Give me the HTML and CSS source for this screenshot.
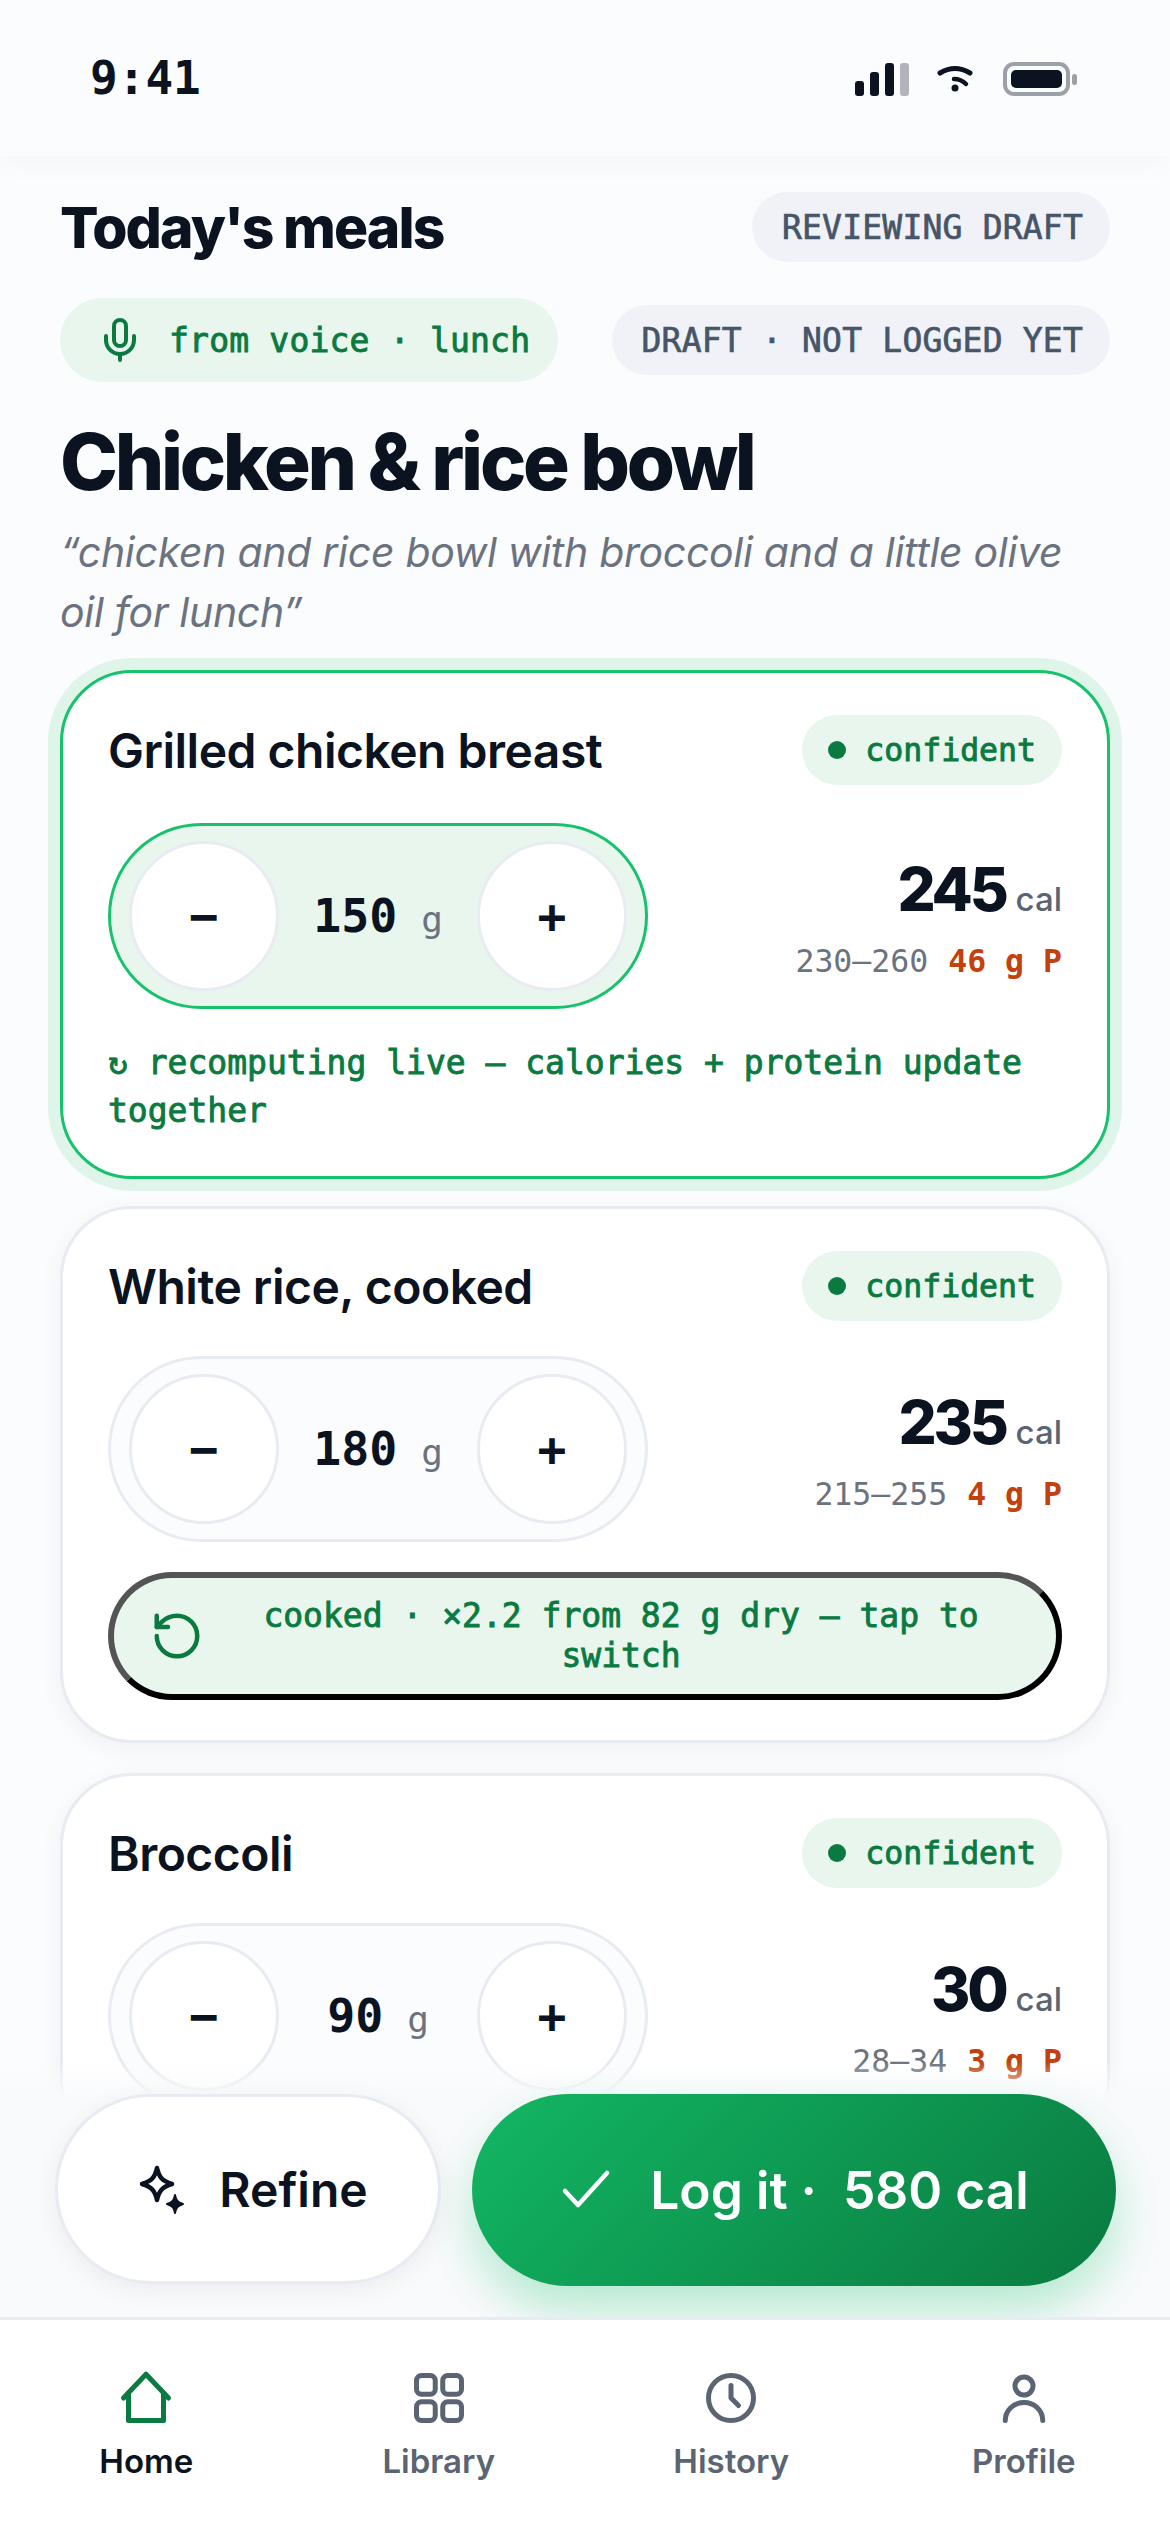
FILE: index.html
```html
<!DOCTYPE html>
<html lang="en">
<head>
    <meta charset="UTF-8">
    <meta name="viewport" content="width=device-width, initial-scale=1.0">
    <title>Today's meals</title>
    <link rel="stylesheet" href="styles.css">
</head>
<body>
    <div class="status-bar">
        <span class="clock">9:41</span>
        <div class="status-icons">
            <svg width="54" height="33" viewBox="0 0 54 33">
                <rect x="0" y="18" width="9" height="15" rx="3" fill="#0b1220"/>
                <rect x="15" y="9" width="9" height="24" rx="3" fill="#0b1220"/>
                <rect x="30" y="0" width="9" height="33" rx="3" fill="#0b1220"/>
                <rect x="45" y="0" width="9" height="33" rx="3" fill="#b1b4bb"/>
            </svg>
            <svg width="40" height="30" viewBox="0 0 40 30" fill="none" stroke="#0b1220" stroke-width="5" stroke-linecap="round">
                <path d="M4 9Q19 0 34 9"/>
                <path d="M18 15Q25 15 30 20" stroke-width="4.5"/>
                <circle cx="19" cy="24" r="3.5" fill="#0b1220" stroke="none"/>
            </svg>
            <div class="battery">
                <div class="battery-body"><div class="battery-fill"></div></div>
                <div class="battery-nub"></div>
            </div>
        </div>
    </div>

    <main class="content">
        <div class="scroll">
            <div class="top-row">
                <h2 class="page-title">Today's meals</h2>
                <span class="pill">REVIEWING DRAFT</span>
            </div>
            <div class="top-row">
                <span class="pill pill-voice">
                    <svg width="48" height="48" viewBox="0 0 24 24" fill="none" stroke="currentColor" stroke-width="2" stroke-linecap="round" stroke-linejoin="round">
                        <path d="M12 2a3 3 0 0 0-3 3v7a3 3 0 0 0 6 0V5a3 3 0 0 0-3-3z"/>
                        <path d="M19 10v2a7 7 0 0 1-14 0v-2"/>
                        <path d="M12 19v3"/>
                    </svg>
                    from voice · lunch
                </span>
                <span class="pill">DRAFT · NOT LOGGED YET</span>
            </div>
            <h1 class="meal-title">Chicken &amp; rice bowl</h1>
            <p class="transcript">“chicken and rice bowl with broccoli and a little olive oil for lunch”</p>

            <div class="cards">
                <section class="card card-active">
                    <div class="card-head">
                        <h3>Grilled chicken breast</h3>
                        <span class="chip"><i class="dot"></i>confident</span>
                    </div>
                    <div class="card-row">
                        <div class="stepper stepper-active">
                            <button class="step">−</button>
                            <div class="amount"><b>150</b><span>g</span></div>
                            <button class="step">+</button>
                        </div>
                        <div class="nums">
                            <div class="cal"><b>245</b><span>cal</span></div>
                            <div class="range">230–260<b>46 g P</b></div>
                        </div>
                    </div>
                    <p class="note">↻ recomputing live — calories + protein update together</p>
                </section>

                <section class="card">
                    <div class="card-head">
                        <h3>White rice, cooked</h3>
                        <span class="chip"><i class="dot"></i>confident</span>
                    </div>
                    <div class="card-row">
                        <div class="stepper">
                            <button class="step">−</button>
                            <div class="amount"><b>180</b><span>g</span></div>
                            <button class="step">+</button>
                        </div>
                        <div class="nums">
                            <div class="cal"><b>235</b><span>cal</span></div>
                            <div class="range">215–255<b>4 g P</b></div>
                        </div>
                    </div>
                    <button class="switch">
                        <svg width="54" height="54" viewBox="0 0 24 24" fill="none" stroke="currentColor" stroke-width="2" stroke-linecap="round" stroke-linejoin="round">
                            <path d="M3 12a9 9 0 1 0 9-9 9.75 9.75 0 0 0-6.74 2.74L3 8"/>
                            <path d="M3 3v5h5"/>
                        </svg>
                        <span>cooked · ×2.2 from 82 g dry — tap to switch</span>
                    </button>
                </section>

                <section class="card">
                    <div class="card-head">
                        <h3>Broccoli</h3>
                        <span class="chip"><i class="dot"></i>confident</span>
                    </div>
                    <div class="card-row">
                        <div class="stepper">
                            <button class="step">−</button>
                            <div class="amount"><b>90</b><span>g</span></div>
                            <button class="step">+</button>
                        </div>
                        <div class="nums">
                            <div class="cal"><b>30</b><span>cal</span></div>
                            <div class="range">28–34<b>3 g P</b></div>
                        </div>
                    </div>
                </section>
            </div>
        </div>

        <div class="actions">
            <button class="btn-refine">
                <svg width="54" height="54" viewBox="0 0 54 54" fill="none" stroke="#0b1220" stroke-width="4.5" stroke-linejoin="round">
                    <path d="M21 6C23 15 26 19 36 22C26 25 23 29 21 38C19 29 16 25 6 22C16 19 19 15 21 6Z"/>
                    <path d="M39 33C40 38 41 40 47 42C41 44 40 46 39 51C38 46 37 44 31 42C37 40 38 38 39 33Z" fill="#0b1220" stroke-width="2"/>
                </svg>
                Refine
            </button>
            <button class="btn-log">
                <svg width="54" height="54" viewBox="0 0 54 54" fill="none" stroke="#fff" stroke-width="4.5" stroke-linecap="round" stroke-linejoin="round">
                    <path d="M6 28L19 42L48 10"/>
                </svg>
                <span>Log it ·&nbsp; 580 cal</span>
            </button>
        </div>
    </main>

    <nav class="tabs">
        <a class="tab tab-on">
            <svg width="60" height="60" viewBox="0 0 24 24" fill="none" stroke="#0a7a40" stroke-width="2" stroke-linecap="round" stroke-linejoin="round">
                <path d="M3 12L12 2.5L21 12"/>
                <path d="M5 10V21H19V10"/>
            </svg>
            Home
        </a>
        <a class="tab">
            <svg width="60" height="60" viewBox="0 0 24 24" fill="none" stroke="#5b6472" stroke-width="2" stroke-linecap="round" stroke-linejoin="round">
                <rect x="3" y="3" width="7.5" height="7.5" rx="2"/>
                <rect x="13.5" y="3" width="7.5" height="7.5" rx="2"/>
                <rect x="3" y="13.5" width="7.5" height="7.5" rx="2"/>
                <rect x="13.5" y="13.5" width="7.5" height="7.5" rx="2"/>
            </svg>
            Library
        </a>
        <a class="tab">
            <svg width="60" height="60" viewBox="0 0 24 24" fill="none" stroke="#5b6472" stroke-width="2" stroke-linecap="round" stroke-linejoin="round">
                <circle cx="12" cy="12" r="9"/>
                <path d="M12 7v5l3 3"/>
            </svg>
            History
        </a>
        <a class="tab">
            <svg width="60" height="60" viewBox="0 0 24 24" fill="none" stroke="#5b6472" stroke-width="2" stroke-linecap="round" stroke-linejoin="round">
                <circle cx="12" cy="7.2" r="3.6"/>
                <path d="M4.5 21c0-4 3.3-7.2 7.5-7.2s7.5 3.2 7.5 7.2"/>
            </svg>
            Profile
        </a>
    </nav>
</body>
</html>
```

FILE: styles.css
```css
* {
    box-sizing: border-box;
}

body {
    margin: 0;
    height: 100vh;
    display: flex;
    flex-direction: column;
    overflow: hidden;
    background-color: #fbfcfe;
    color: #0b1220;
    font-family: Inter, "Liberation Sans", sans-serif;
}

button {
    font-family: inherit;
    cursor: pointer;
}

/* status bar */
.status-bar {
    height: 156px;
    flex: none;
    padding: 2px 93px 0 90px;
    display: flex;
    align-items: center;
    justify-content: space-between;
    background-color: #fbfcfe;
    box-shadow: 0 6px 30px rgba(15, 23, 42, 0.03);
    position: relative;
}

.clock {
    margin-bottom: 3px;
    font-family: "DejaVu Sans Mono", monospace;
    font-size: 46px;
    font-weight: 700;
}

.status-icons {
    display: flex;
    align-items: center;
    gap: 27px;
}

.battery {
    display: flex;
    align-items: center;
    gap: 2px;
}

.battery-body {
    width: 67px;
    height: 34px;
    padding: 4px;
    border: 4px solid #9ca0a8;
    border-radius: 11px;
}

.battery-fill {
    height: 100%;
    border-radius: 5px;
    background-color: #0b1220;
}

.battery-nub {
    width: 5px;
    height: 11px;
    border-radius: 3px;
    background-color: #9ca0a8;
}

/* main area */
.content {
    flex: 1;
    min-height: 0;
    position: relative;
    overflow: hidden;
}

.scroll {
    padding: 36px 60px 0;
}

.top-row {
    display: flex;
    align-items: center;
    justify-content: space-between;
    margin-bottom: 36px;
    min-height: 70px;
}

.page-title {
    margin: 0;
    font-size: 57px;
    font-weight: 800;
    letter-spacing: -1.9px;
}

.pill {
    height: 70px;
    padding: 0 27px 0 30px;
    display: flex;
    align-items: center;
    border-radius: 35px;
    background-color: #f0f2f8;
    color: #475569;
    font-family: "DejaVu Sans Mono", monospace;
    font-size: 33px;
    letter-spacing: 0.2px;
    -webkit-text-stroke: 0.7px currentColor;
    white-space: nowrap;
}

.pill-voice {
    height: 84px;
    border-radius: 42px;
    padding: 0 28px 0 36px;
    gap: 25px;
    background-color: #e8f6ee;
    color: #0a7a40;
    -webkit-text-stroke: 0.9px currentColor;
}

.meal-title {
    margin: 0;
    font-size: 78px;
    line-height: 88px;
    font-weight: 800;
    letter-spacing: -3.3px;
}

.transcript {
    margin: 16px 0 0;
    padding-right: 40px;
    font-size: 41px;
    line-height: 60px;
    letter-spacing: -0.3px;
    font-style: italic;
    color: #6b7280;
}

/* cards */
.cards {
    margin-top: 28px;
    display: flex;
    flex-direction: column;
    gap: 30px;
}

.card {
    padding: 42px 45px 40px;
    border: 3px solid #e8ebf2;
    border-radius: 72px;
    background-color: #fff;
    box-shadow: 0 6px 24px rgba(15, 23, 42, 0.05);
}

.card-active {
    padding-bottom: 41px;
    margin-bottom: -3px;
    border-color: #16c26b;
    box-shadow: 0 0 0 12px #dff5ea;
}

.card-active .card-row {
    margin-top: 38px;
}

.card-head {
    display: flex;
    align-items: center;
    justify-content: space-between;
    height: 70px;
}

.card-head h3 {
    margin: 0;
    font-size: 48px;
    font-weight: 600;
    letter-spacing: -0.5px;
}

.chip {
    height: 70px;
    padding: 0 26px;
    display: flex;
    align-items: center;
    gap: 19px;
    border-radius: 35px;
    background-color: #e8f6ee;
    color: #0a7a40;
    font-family: "DejaVu Sans Mono", monospace;
    font-size: 31.5px;
    -webkit-text-stroke: 0.9px currentColor;
}

.dot {
    width: 18px;
    height: 18px;
    border-radius: 50%;
    background-color: #0a7a40;
}

.card-row {
    margin-top: 35px;
    display: flex;
    align-items: center;
    justify-content: space-between;
}

.stepper {
    width: 540px;
    padding: 15px 18px;
    display: flex;
    align-items: center;
    border: 3px solid #e8ebf2;
    border-radius: 93px;
    background-color: #fbfcfe;
}

.stepper-active {
    border-color: #16c26b;
    background-color: #e8f6ee;
}

.step {
    width: 150px;
    height: 150px;
    padding: 0;
    border: 3px solid #e8ebf2;
    border-radius: 50%;
    background-color: #fff;
    color: #0b1220;
    font-family: "DejaVu Sans Mono", monospace;
    font-size: 48px;
    font-weight: 700;
}

.amount {
    flex: 1;
    display: flex;
    align-items: baseline;
    justify-content: center;
    gap: 24px;
    font-family: "DejaVu Sans Mono", monospace;
}

.amount b {
    font-size: 46.5px;
}

.amount span {
    font-size: 36px;
    color: #6b7280;
}

.nums {
    text-align: right;
}

.cal {
    display: flex;
    align-items: baseline;
    justify-content: flex-end;
    gap: 10px;
}

.cal b {
    font-size: 60px;
    font-weight: 800;
    letter-spacing: -3.2px;
}

.cal span {
    font-size: 33px;
    font-weight: 500;
    color: #5b6472;
}

.range {
    margin-top: 18px;
    font-family: "DejaVu Sans Mono", monospace;
    font-size: 31.5px;
    color: #6b7280;
}

.range b {
    margin-left: 20px;
    color: #c2410c;
}

.note {
    margin: 30px 0 0;
    font-family: "DejaVu Sans Mono", monospace;
    font-size: 33px;
    line-height: 48px;
    color: #0a7a40;
    -webkit-text-stroke: 0.9px currentColor;
}

.switch {
    width: 100%;
    height: 128px;
    margin-top: 30px;
    padding: 0 36px;
    display: flex;
    align-items: center;
    gap: 18px;
    border: 6px outset #000;
    border-radius: 64px;
    background-color: #e8f6ee;
    color: #0a7a40;
    font-family: "DejaVu Sans Mono", monospace;
    font-size: 33px;
    line-height: 40px;
    -webkit-text-stroke: 0.9px currentColor;
}

.switch svg {
    flex: none;
}

.switch span {
    flex: 1;
    text-align: center;
}

/* floating actions */
.actions {
    position: absolute;
    left: 0;
    right: 0;
    bottom: 0;
    padding: 64px 54px 31px 55px;
    display: flex;
    gap: 31px;
    background: linear-gradient(to bottom, rgba(251, 252, 254, 0) 32px, #f9fafc 70px);
}

.btn-refine {
    width: 386px;
    height: 190px;
    padding-left: 14px;
    display: flex;
    align-items: center;
    justify-content: center;
    gap: 29px;
    border: 3px solid #e8ebf2;
    border-radius: 95px;
    background-color: #fff;
    color: #0b1220;
    font-size: 48px;
    font-weight: 600;
    box-shadow: 0 6px 24px rgba(15, 23, 42, 0.06);
}

.btn-log {
    flex: 1;
    height: 192px;
    padding-left: 6px;
    display: flex;
    align-items: center;
    justify-content: center;
    gap: 37px;
    border: none;
    border-radius: 96px;
    background: linear-gradient(135deg, #12b763, #0a7a40);
    color: #fff;
    font-size: 51.5px;
    font-weight: 600;
    box-shadow: 0 24px 48px rgba(22, 194, 107, 0.3);
}

/* tab bar */
.tabs {
    height: 215px;
    flex: none;
    padding-top: 48px;
    display: grid;
    grid-template-columns: repeat(4, 1fr);
    border-top: 3px solid #e8ebf2;
    background-color: #fff;
}

.tab {
    display: flex;
    flex-direction: column;
    align-items: center;
    gap: 13px;
    font-size: 33px;
    font-weight: 600;
    color: #5b6472;
}

.tab-on {
    color: #0b1220;
}
```
